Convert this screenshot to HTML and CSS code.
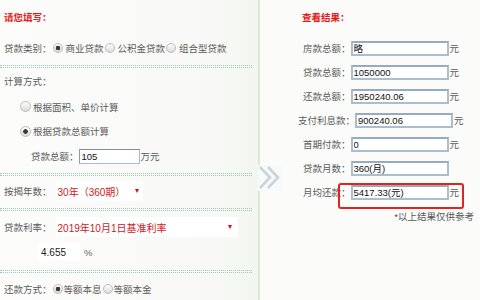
FILE: index.html
```html
<!DOCTYPE html>
<html lang="zh-CN">
<head>
<meta charset="utf-8">
<title>房贷计算器</title>
<link rel="stylesheet" href="styles.css">
</head>
<body>
<div class="page">
  <section class="left">
    <div class="hd">请您填写：</div>
    <div class="row r-type">
      <span class="lbl">贷款类别：</span>
      <input class="radio" type="radio" name="t" checked><span>商业贷款</span>
      <input class="radio" type="radio" name="t"><span>公积金贷款</span>
      <input class="radio" type="radio" name="t"><span>组合型贷款</span>
    </div>
    <div class="dots d1"></div>
    <div class="row r-calc"><span class="lbl">计算方式：</span></div>
    <div class="row r-opt r-opt1"><input class="radio" type="radio" name="c"><span>根据面积、单价计算</span></div>
    <div class="row r-opt r-opt2"><input class="radio" type="radio" name="c" checked><span>根据贷款总额计算</span></div>
    <div class="row r-amt"><span class="lbl">贷款总额：</span><input class="inp-sm" type="text" value="105" readonly><span class="unit">万元</span></div>
    <div class="dots d2"></div>
    <div class="row r-years"><span class="lbl">按揭年数：</span><span class="sel sel-years">30年（360期）<i class="tri"></i></span></div>
    <div class="dots d3"></div>
    <div class="row r-rate"><span class="lbl">贷款利率：</span><span class="sel sel-rate">2019年10月1日基准利率<i class="tri"></i></span></div>
    <div class="row r-pct"><span class="pct-box">4.655</span><span class="pct">%</span></div>
    <div class="dots d4"></div>
    <div class="row r-pay">
      <span class="lbl">还款方式：</span>
      <input class="radio" type="radio" name="p" checked><span>等额本息</span>
      <input class="radio" type="radio" name="p"><span>等额本金</span>
    </div>
  </section>
  <section class="right">
    <div class="rhd">查看结果：</div>
    <div class="rrow"><span class="lbl">房款总额：</span><input class="rinp" type="text" value="略" readonly><span class="unit">元</span></div>
    <div class="rrow"><span class="lbl">贷款总额：</span><input class="rinp" type="text" value="1050000" readonly><span class="unit">元</span></div>
    <div class="rrow"><span class="lbl">还款总额：</span><input class="rinp" type="text" value="1950240.06" readonly><span class="unit">元</span></div>
    <div class="rrow wide"><span class="lbl">支付利息款：</span><input class="rinp" type="text" value="900240.06" readonly><span class="unit">元</span></div>
    <div class="rrow"><span class="lbl">首期付款：</span><input class="rinp" type="text" value="0" readonly><span class="unit">元</span></div>
    <div class="rrow"><span class="lbl">贷款月数：</span><input class="rinp" type="text" value="360(月)" readonly></div>
    <div class="rrow r-month"><span class="lbl">月均还款：</span><input class="rinp" type="text" value="5417.33(元)" readonly><span class="unit">元</span><span class="hl"></span></div>
    <div class="note">*以上结果仅供参考</div>
  </section>
  <svg class="chev" viewBox="0 0 24 26" width="24" height="26" aria-hidden="true">
    <path d="M2 2 L12 12.5 L2 23" fill="none" stroke="#c6d5de" stroke-width="2.6"/>
    <path d="M10 2 L20 12.5 L10 23" fill="none" stroke="#c6d5de" stroke-width="2.6"/>
  </svg>
</div>
</body>
</html>
```
FILE: styles.css
```css
html, body {
  margin: 0;
  padding: 0;
}
body {
  width: 480px;
  height: 300px;
  overflow: hidden;
  font-family: "Liberation Sans", "Noto Sans CJK SC", sans-serif;
  font-size: 9.5px;
  color: #5a5a5a;
  background: #fbfcf9;
}
.page {
  position: relative;
  display: flex;
  height: 300px;
}
.left {
  width: 260px;
  box-sizing: border-box;
  padding-left: 4px;
  border-right: 2px solid #dce8d1;
  background: linear-gradient(to right, #fcfcfb 0%, #f8f9f6 85%, #f2f7ee 100%);
}
.right {
  flex: 1;
  background: #fbfcfa;
}
.hd, .rhd {
  height: 34px;
  display: flex;
  align-items: center;
  color: #e31b1b;
  font-weight: bold;
}
.rhd {
  padding-left: 42px;
  margin-bottom: 2px;
}
.row {
  display: flex;
  align-items: center;
  white-space: nowrap;
}
.lbl {
  color: #5a5a5a;
}
.radio {
  appearance: none;
  -webkit-appearance: none;
  box-sizing: border-box;
  width: 10px;
  height: 10px;
  margin: 0;
  border-radius: 50%;
  border: 1px solid #bcbcbc;
  background: linear-gradient(#ffffff, #dadada);
  flex: none;
}
.radio:checked {
  background: radial-gradient(circle, #3a3a3a 0 2px, transparent 2.6px), linear-gradient(#ffffff, #dadada);
}
.r-type { height: 28px; }
.r-type .radio { margin: 0 3px 0 1px; }
.dots {
  margin-left: -4px;
  width: 252px;
  height: 1px;
  border-top: 1px dotted #9ccab9;
  border-bottom: 1px dotted #9ccab9;
}
.d1 { margin-top: 3px; }
.d2 { margin-top: 4px; }
.d3 { margin-top: 2px; }
.d4 { margin-top: 9px; }
.r-calc { height: 26px; }
.r-opt .radio {
  width: 11px;
  height: 11px;
  margin: 0 2px 0 16px;
}
.r-opt1 { height: 25px; }
.r-opt2 { height: 24px; }
.r-amt { height: 26px; }
.r-amt .lbl { margin-left: 27px; }
.inp-sm {
  box-sizing: border-box;
  width: 61px;
  height: 15px;
  margin: 0;
  padding: 0 2px;
  border: 1px solid #a7bccd;
  border-top-color: #7e8e9a;
  border-left-color: #8c9ba7;
  background: #fff;
  font: 9.5px "Liberation Sans", "Noto Sans CJK SC", sans-serif;
  color: #111;
  outline: none;
}
.unit { margin-left: 1px; }
.r-years { height: 30px; }
.r-rate { height: 32px; }
.sel {
  position: relative;
  box-sizing: border-box;
  height: 20px;
  margin-left: 4px;
  padding-left: 2px;
  display: flex;
  align-items: center;
  background: #fff;
  color: #cc2128;
  font-size: 10px;
}
.sel-years { width: 87px; }
.sel-rate { width: 182px; }
.tri {
  position: absolute;
  top: 8px;
  right: 4px;
  width: 0;
  height: 0;
  border-left: 2.5px solid transparent;
  border-right: 2.5px solid transparent;
  border-top: 4.5px solid #d81010;
}
.sel-rate .tri { right: 6px; }
.r-pct { height: 18px; }
.pct-box {
  box-sizing: border-box;
  width: 42px;
  height: 18px;
  margin-left: 34px;
  padding-left: 3px;
  display: flex;
  align-items: center;
  background: #fff;
  color: #222;
  font-size: 10px;
}
.pct {
  margin-left: 4px;
  color: #666;
}
.r-pay { height: 32px; }
.r-pay .radio { margin: 0 1px 0 1px; }
.rrow {
  position: relative;
  height: 24px;
  display: flex;
  align-items: center;
  padding-left: 43px;
  white-space: nowrap;
}
.rrow.wide { padding-left: 38px; }
.rinp {
  box-sizing: border-box;
  width: 98px;
  height: 15px;
  margin: 0;
  padding: 0 1px;
  border: 2px solid #abbecc;
  border-top-color: #97abbb;
  background: #fff;
  font: 9.5px "Liberation Sans", "Noto Sans CJK SC", sans-serif;
  color: #111;
  outline: none;
}
.hl {
  position: absolute;
  left: 78px;
  top: 3px;
  width: 126px;
  height: 26px;
  box-sizing: border-box;
  border: 2px solid #e42222;
  border-radius: 3px;
}
.note {
  margin-top: 3px;
  height: 20px;
  line-height: 20px;
  text-align: right;
  padding-right: 6px;
  font-size: 9.5px;
  color: #555;
}
.chev {
  position: absolute;
  left: 258px;
  top: 165px;
  background: #f8faf9;
}
```
